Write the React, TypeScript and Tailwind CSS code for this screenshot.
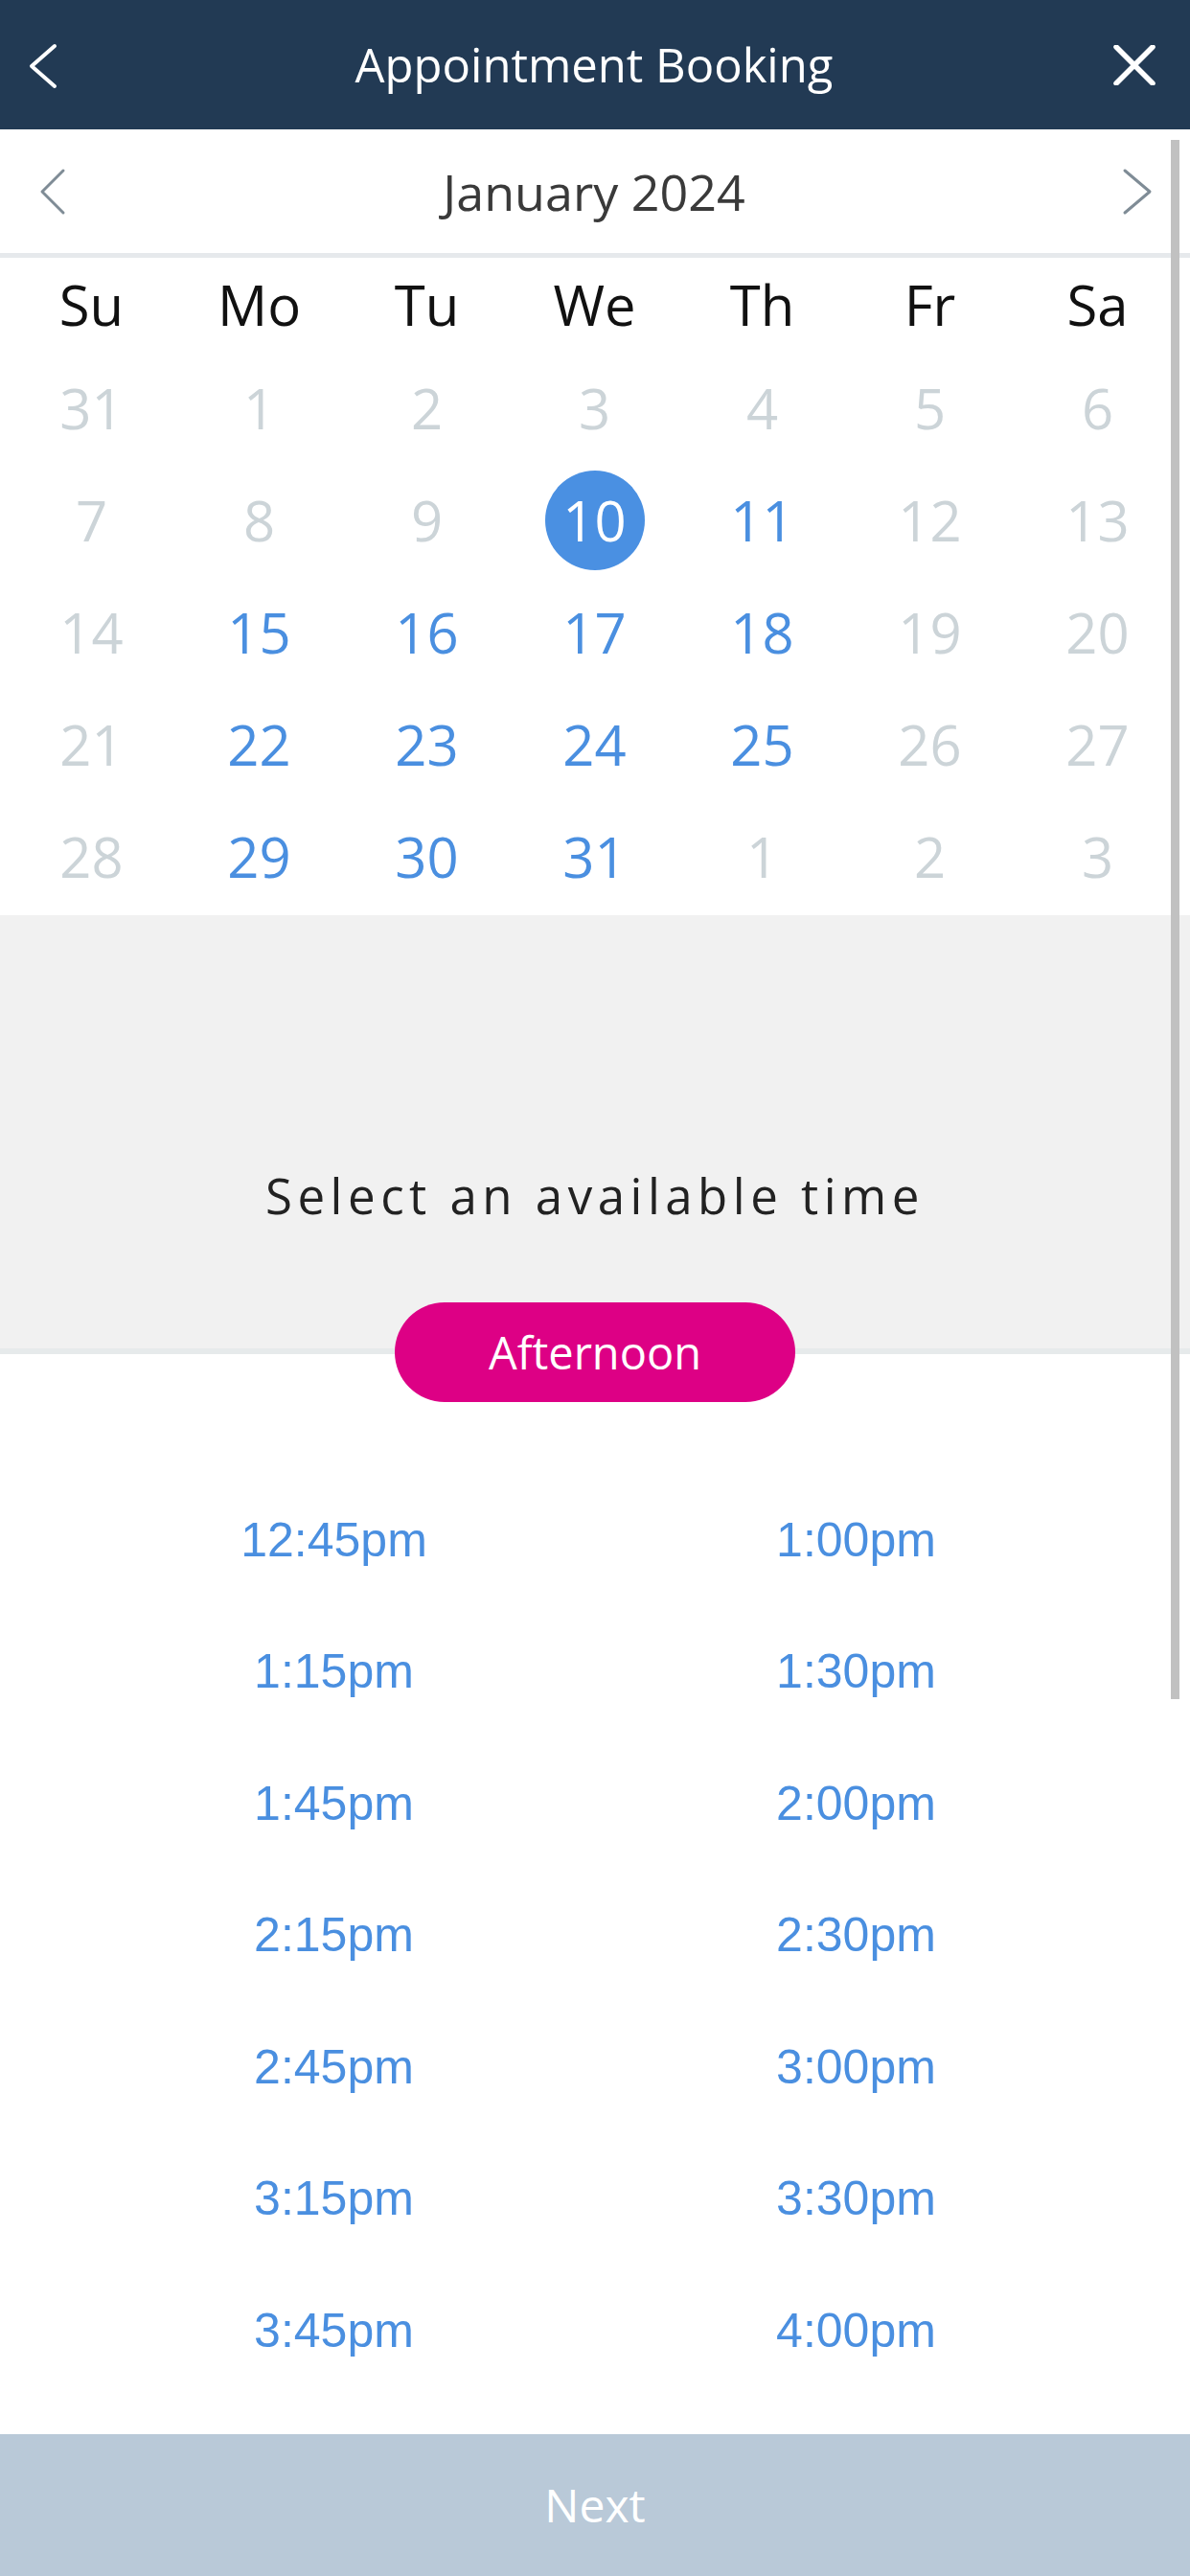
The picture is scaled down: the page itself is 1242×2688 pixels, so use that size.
import React from 'react'

type Day = { n: number; kind: 'off' | 'on' | 'sel' }

const weekdays = ['Su', 'Mo', 'Tu', 'We', 'Th', 'Fr', 'Sa']

const weeks: Day[][] = [
  [31, 1, 2, 3, 4, 5, 6].map((n) => ({ n, kind: 'off' as const })),
  [
    { n: 7, kind: 'off' },
    { n: 8, kind: 'off' },
    { n: 9, kind: 'off' },
    { n: 10, kind: 'sel' },
    { n: 11, kind: 'on' },
    { n: 12, kind: 'off' },
    { n: 13, kind: 'off' },
  ],
  [14, 15, 16, 17, 18, 19, 20].map((n, i) => ({ n, kind: i >= 1 && i <= 4 ? 'on' : 'off' }) as Day),
  [21, 22, 23, 24, 25, 26, 27].map((n, i) => ({ n, kind: i >= 1 && i <= 4 ? 'on' : 'off' }) as Day),
  [28, 29, 30, 31, 1, 2, 3].map((n, i) => ({ n, kind: i >= 1 && i <= 3 ? 'on' : 'off' }) as Day),
]

const times = [
  '12:45pm', '1:00pm',
  '1:15pm', '1:30pm',
  '1:45pm', '2:00pm',
  '2:15pm', '2:30pm',
  '2:45pm', '3:00pm',
  '3:15pm', '3:30pm',
  '3:45pm', '4:00pm',
]

export default function App() {
  return (
    <div className="relative flex h-[2688px] w-[1242px] flex-col overflow-hidden bg-white font-['Open_Sans',sans-serif]">
      {/* top bar */}
      <header className="flex h-[135px] shrink-0 items-center justify-between bg-[#223a54] px-[28px] text-white">
        <svg width="34" height="48" viewBox="0 0 34 48" fill="none" className="mt-[2px]">
          <path d="M29 3 L5 24 L29 45" stroke="white" strokeWidth="4" strokeLinecap="round" strokeLinejoin="round" />
        </svg>
        <h1 className="ml-[16px] text-[49px] leading-none">Appointment Booking</h1>
        <svg width="44" height="42" viewBox="0 0 44 42" fill="none" className="mr-[8px]">
          <path d="M3 2 L41 40 M41 2 L3 40" stroke="white" strokeWidth="5.5" strokeLinecap="round" />
        </svg>
      </header>

      {/* month switcher */}
      <div className="flex h-[134px] shrink-0 items-center justify-between border-b-[5px] border-[#e6e9ec] pl-[40px] pr-[38px]">
        <svg width="30" height="50" viewBox="0 0 30 50" fill="none">
          <path d="M26 3 L4 25 L26 47" stroke="#7f8c96" strokeWidth="3" strokeLinecap="round" strokeLinejoin="round" />
        </svg>
        <div className="text-[52px] leading-none text-[#3a3a3a]">January 2024</div>
        <svg width="34" height="50" viewBox="0 0 34 50" fill="none">
          <path d="M4 3 L30 25 L4 47" stroke="#7f8c96" strokeWidth="3" strokeLinecap="round" strokeLinejoin="round" />
        </svg>
      </div>

      {/* calendar */}
      <div className="shrink-0 pb-[3px] pl-[8px] pr-[9px]">
        <div className="grid h-[98px] grid-cols-7 items-center">
          {weekdays.map((d) => (
            <div key={d} className="text-center text-[58px] leading-none text-[#111]">
              {d}
            </div>
          ))}
        </div>
        {weeks.map((w, wi) => (
          <div key={wi} className="grid h-[117px] grid-cols-7 items-center">
            {w.map((d, di) => (
              <div key={di} className="flex justify-center">
                {d.kind === 'sel' ? (
                  <span className="flex h-[104px] w-[104px] items-center justify-center rounded-full bg-[#4a90e2] text-[58px] leading-none text-white">
                    {d.n}
                  </span>
                ) : (
                  <span
                    className={
                      d.kind === 'on'
                        ? 'text-[58px] leading-none text-[#4a8fe0]'
                        : 'text-[58px] leading-none text-[#ccd4d8]'
                    }
                  >
                    {d.n}
                  </span>
                )}
              </div>
            ))}
          </div>
        ))}
      </div>

      {/* time heading */}
      <div className="flex h-[458px] shrink-0 flex-col items-center border-b-[6px] border-[#e6eaeb] bg-[#f1f1f1] pt-[262px]">
        <p className="text-[51px] leading-[60px] tracking-[5.5px] text-[#222]">Select an available time</p>
        <button className="relative z-10 -mb-[56px] mt-[82px] flex h-[104px] w-[418px] items-center justify-center rounded-full bg-[#dd0085] text-[47px] leading-none text-white">
          Afternoon
        </button>
      </div>

      {/* slots */}
      <div className="flex-1 px-[76px] pt-[125px]">
        <div className="grid grid-cols-2">
          {times.map((t) => (
            <div
              key={t}
              className="flex h-[137.5px] items-center justify-center font-['Liberation_Sans',Arial,sans-serif] text-[50px] leading-none text-[#4a8fe0]"
            >
              {t}
            </div>
          ))}
        </div>
      </div>

      {/* footer */}
      <button className="flex h-[148px] w-full shrink-0 items-center justify-center bg-[#b9c9d8] text-[48px] leading-none text-white">
        Next
      </button>

      {/* scrollbar thumb */}
      <div className="absolute left-[1222px] top-[146px] h-[1627px] w-[9px] bg-[#c1c1c1]" />
    </div>
  )
}
